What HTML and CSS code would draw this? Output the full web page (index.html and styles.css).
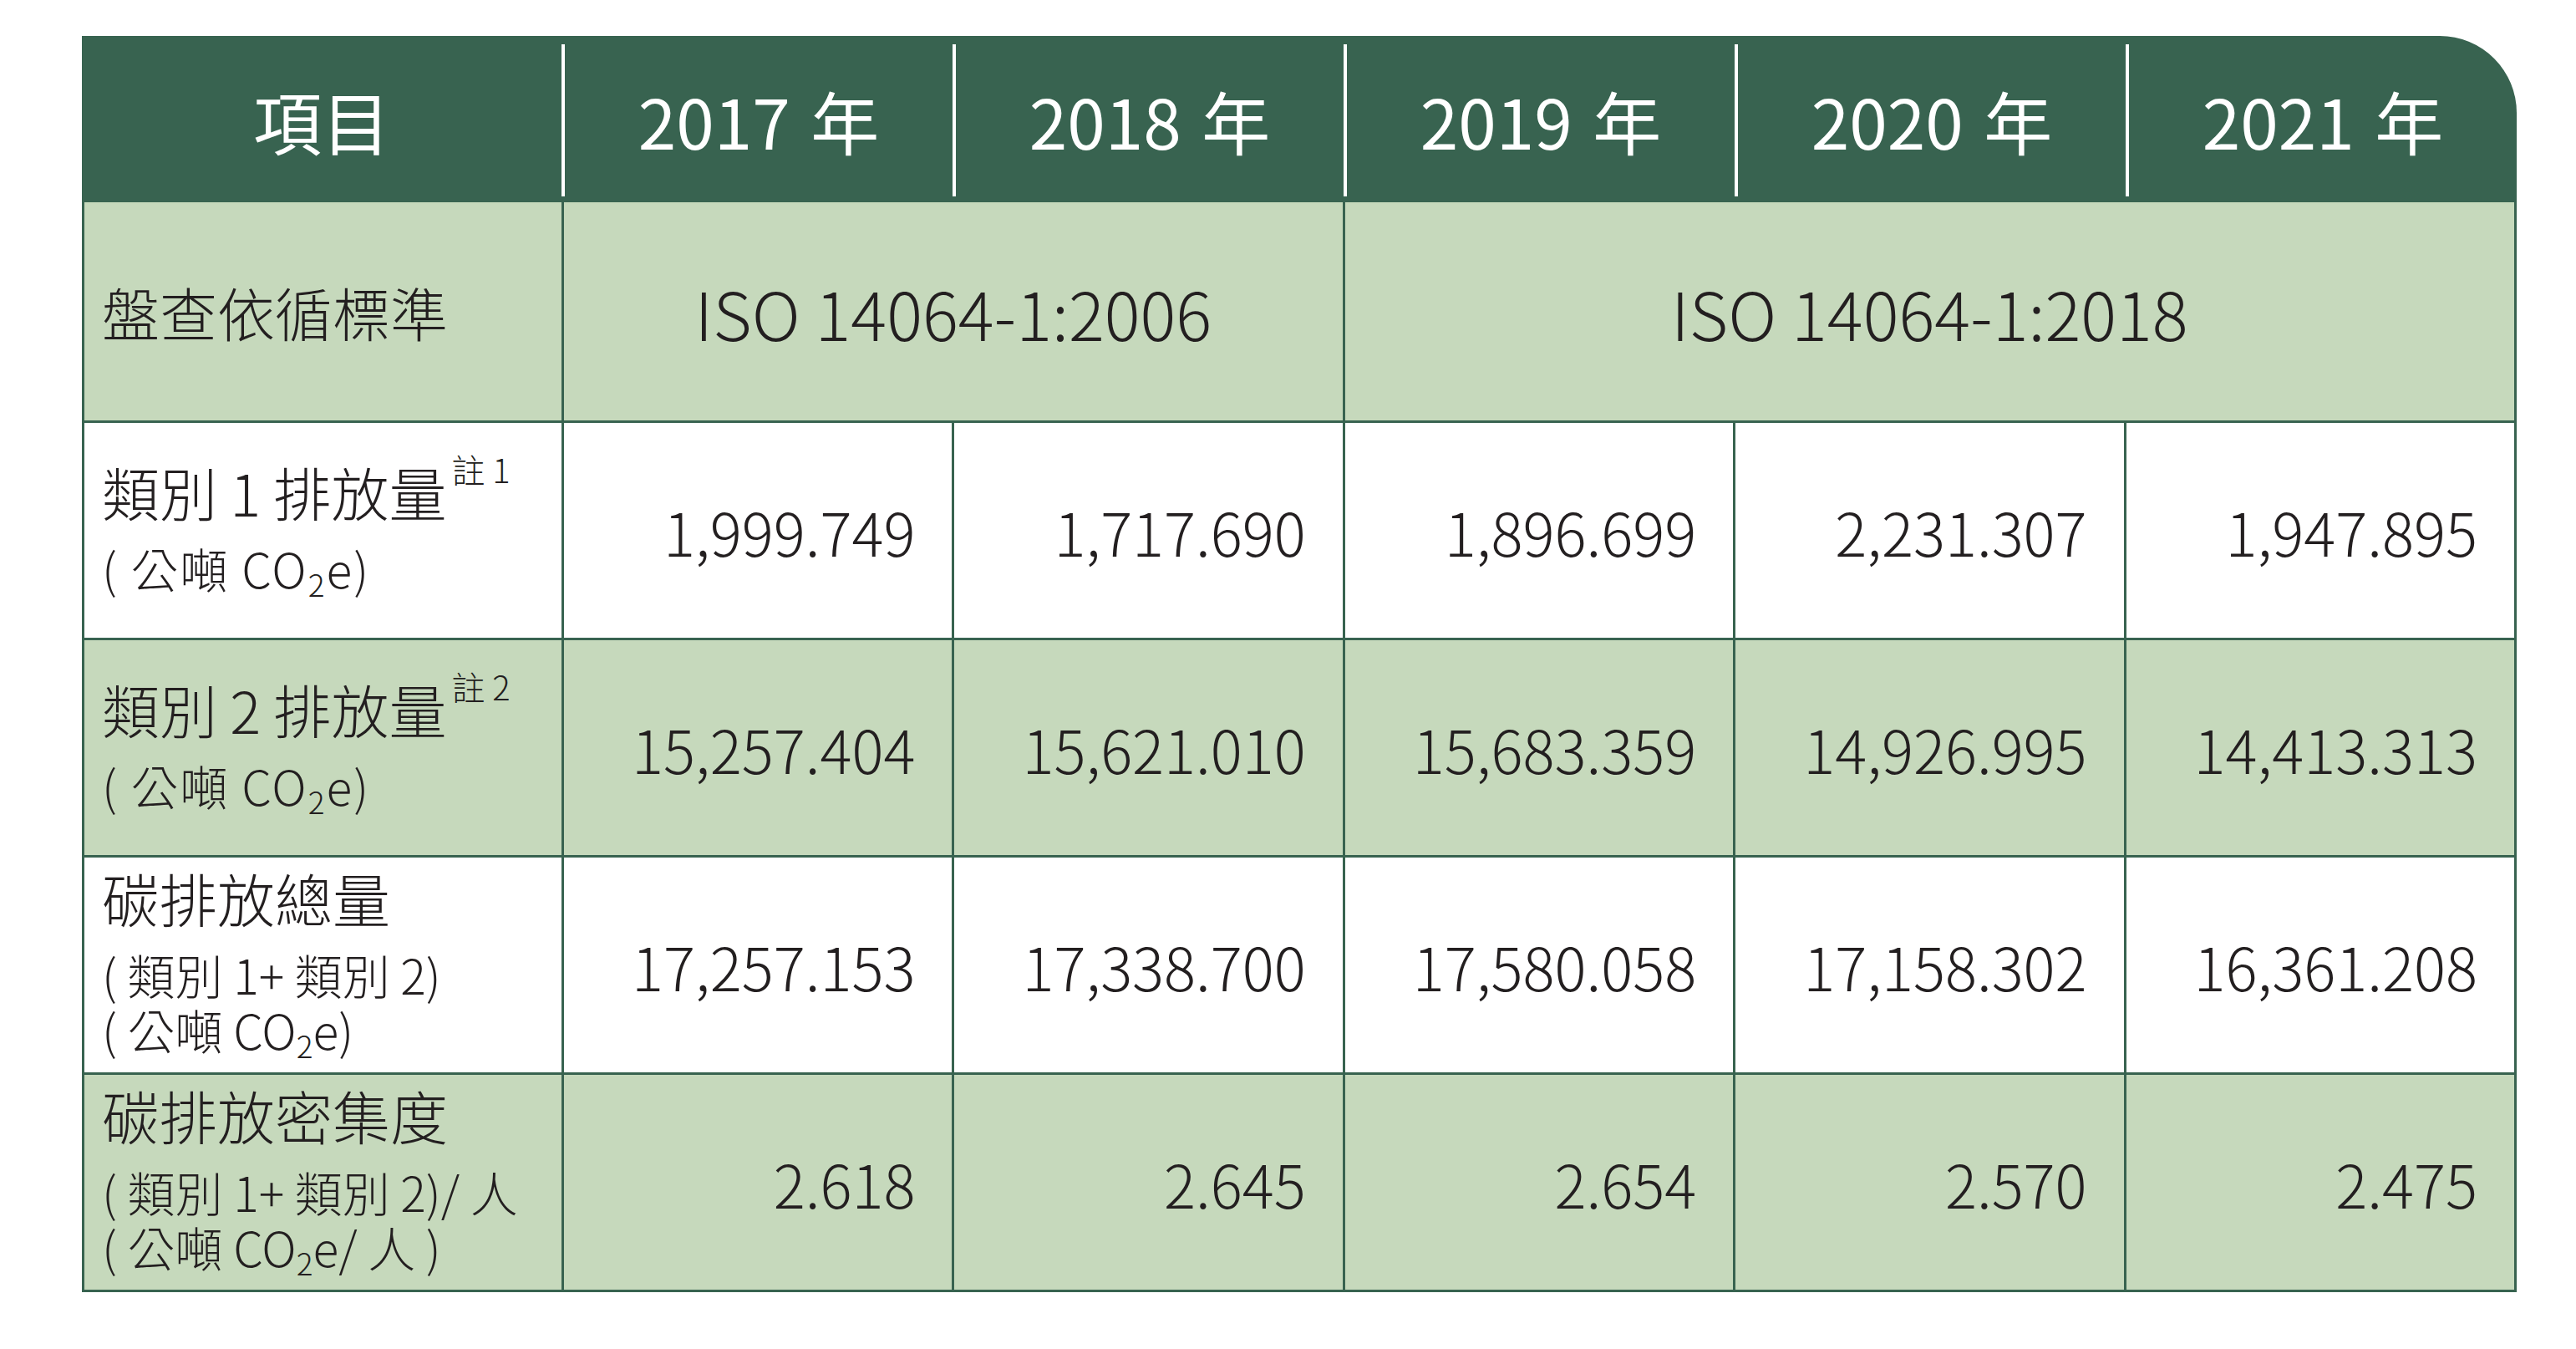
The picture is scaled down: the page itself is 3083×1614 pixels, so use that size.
FILE: index.html
```html
<!DOCTYPE html>
<html lang="zh-Hant">
<head>
<meta charset="utf-8">
<title>溫室氣體排放</title>
<link rel="stylesheet" href="styles.css">
</head>
<body>
<div class="table">
  <div class="head">
    <div class="hc">項目</div>
    <div class="hc">2017 年</div>
    <div class="hc">2018 年</div>
    <div class="hc">2019 年</div>
    <div class="hc">2020 年</div>
    <div class="hc">2021 年</div>
  </div>
  <div class="body">
    <div class="cell label green"><div class="main">盤查依循標準</div></div>
    <div class="cell center green span2">ISO 14064-1:2006</div>
    <div class="cell center green span3">ISO 14064-1:2018</div>

    <div class="cell label two"><div class="main">類別 1 排放量<span class="sup">註 1</span></div><div class="sub wide">( 公噸 CO<span class="subs">2</span>e)</div></div>
    <div class="cell num">1,999.749</div>
    <div class="cell num">1,717.690</div>
    <div class="cell num">1,896.699</div>
    <div class="cell num">2,231.307</div>
    <div class="cell num">1,947.895</div>

    <div class="cell label two green"><div class="main">類別 2 排放量<span class="sup">註 2</span></div><div class="sub wide">( 公噸 CO<span class="subs">2</span>e)</div></div>
    <div class="cell num green">15,257.404</div>
    <div class="cell num green">15,621.010</div>
    <div class="cell num green">15,683.359</div>
    <div class="cell num green">14,926.995</div>
    <div class="cell num green">14,413.313</div>

    <div class="cell label three"><div class="main">碳排放總量</div><div class="sub">( 類別 1+ 類別 2)</div><div class="sub">( 公噸 CO<span class="subs">2</span>e)</div></div>
    <div class="cell num">17,257.153</div>
    <div class="cell num">17,338.700</div>
    <div class="cell num">17,580.058</div>
    <div class="cell num">17,158.302</div>
    <div class="cell num">16,361.208</div>

    <div class="cell label three green"><div class="main">碳排放密集度</div><div class="sub">( 類別 1+ 類別 2)/ 人</div><div class="sub">( 公噸 CO<span class="subs">2</span>e/ 人 )</div></div>
    <div class="cell num green">2.618</div>
    <div class="cell num green">2.645</div>
    <div class="cell num green">2.654</div>
    <div class="cell num green">2.570</div>
    <div class="cell num green">2.475</div>
  </div>
</div>
</body>
</html>
```

FILE: styles.css
```css
html, body {
  margin: 0;
  padding: 0;
  background: #ffffff;
}

body {
  font-family: "Noto Sans CJK TC", "Noto Sans CJK JP", "Noto Sans", sans-serif;
  color: #231f20;
}

.table {
  width: 2914px;
  margin: 43px 0 0 98px;
}

.head {
  display: grid;
  grid-template-columns: 574px repeat(5, 1fr);
  height: 199px;
  box-sizing: border-box;
  padding: 10px 0 7px;
  background: #386350;
  border-top-right-radius: 92px;
}

.hc {
  display: flex;
  align-items: center;
  justify-content: center;
  color: #ffffff;
  font-size: 82px;
  font-weight: 400;
  line-height: 1;
  word-spacing: 6px;
}

.hc + .hc {
  border-left: 4px solid #ffffff;
}

.body {
  display: grid;
  grid-template-columns: 571px repeat(5, 1fr);
  grid-template-rows: 261px repeat(4, 257px);
  gap: 3px;
  background: #386350;
  border: 3px solid #386350;
  border-top: 0;
}

.cell {
  background: #ffffff;
  box-sizing: border-box;
  font-weight: 300;
}

.cell.green {
  background: #c6d9bc;
}

.label {
  display: flex;
  flex-direction: column;
  justify-content: center;
  padding-left: 21px;
}

.label.two {
  padding-bottom: 28px;
}

.label.three {
  padding-bottom: 30px;
}

.main {
  font-size: 69px;
  line-height: 116px;
  white-space: nowrap;
}

.sub {
  font-size: 57px;
  line-height: 66px;
  white-space: nowrap;
}

.sub.wide {
  letter-spacing: 2px;
}

.sup {
  font-size: 40px;
  vertical-align: 40px;
  line-height: 0;
  margin-left: 6px;
  letter-spacing: 0;
}

.subs {
  font-size: 37px;
  vertical-align: -10px;
  line-height: 0;
}

.center {
  display: flex;
  align-items: center;
  justify-content: center;
  font-size: 80px;
}

.span2 {
  grid-column: span 2;
}

.span3 {
  grid-column: span 3;
}

.num {
  display: flex;
  align-items: center;
  justify-content: flex-end;
  padding-right: 44px;
  font-size: 71px;
}
```
